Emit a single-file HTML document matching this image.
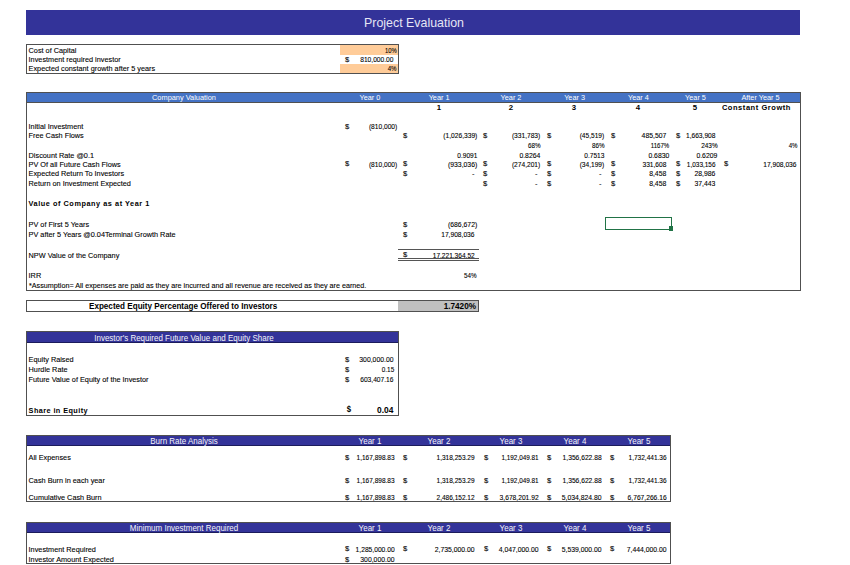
<!DOCTYPE html>
<html><head><meta charset="utf-8"><style>
html,body{margin:0;padding:0;background:#fff;}
body{width:850px;height:565px;position:relative;overflow:hidden;font-family:"Liberation Sans",sans-serif;color:#000;}
.b{position:absolute;box-sizing:border-box;}
.t{position:absolute;white-space:nowrap;}
.k{-webkit-text-stroke:0.1px #000;}
</style></head><body>
<div class="b" style="left:26px;top:10px;width:774px;height:24.5px;background:#333399;"></div>
<div class="t" style="top:17.00px;font-size:12.4px;line-height:12.4px;color:#E6E6F5;left:414.00px;transform:translateX(-50%);transform-origin:center 50%;">Project Evaluation</div>
<div class="b" style="left:340px;top:44.5px;width:58px;height:10.0px;background:#FFCC99;"></div>
<div class="b" style="left:340px;top:63.5px;width:58px;height:10.0px;background:#FFCC99;"></div>
<div class="b" style="left:26px;top:44px;width:373px;height:30px;box-shadow:inset 0 0 0 1px #505050;"></div>
<div class="t k" style="top:46.92px;font-size:7.3px;line-height:7.3px;left:28.60px;">Cost of Capital</div>
<div class="t k" style="top:56.22px;font-size:7.3px;line-height:7.3px;left:28.60px;">Investment required investor</div>
<div class="t k" style="top:65.42px;font-size:7.3px;line-height:7.3px;left:28.60px;">Expected constant growth after 5 years</div>
<div class="t k" style="top:46.82px;font-size:7.3px;line-height:7.3px;right:453.60px;transform:scaleX(0.802);transform-origin:right 50%;">10%</div>
<div class="t k" style="top:55.63px;font-size:8.0px;line-height:8.0px;left:347.20px;transform:translateX(-50%) scaleX(0.95);transform-origin:center 50%;">$</div>
<div class="t k" style="top:55.92px;font-size:7.3px;line-height:7.3px;right:456.00px;transform:scaleX(0.913);transform-origin:right 50%;">810,000.00</div>
<div class="t k" style="top:65.32px;font-size:7.3px;line-height:7.3px;right:453.60px;transform:scaleX(0.836);transform-origin:right 50%;">4%</div>
<div class="b" style="left:26px;top:92px;width:775px;height:199px;box-shadow:inset 0 0 0 1px #505050;"></div>
<div class="b" style="left:26px;top:92px;width:775px;height:11px;background:#4472C4;box-shadow:inset 0 0 0 1px #505050;"></div>
<div class="t" style="top:94.24px;font-size:7.4px;line-height:7.4px;color:#fff;left:184.00px;transform:translateX(-50%);transform-origin:center 50%;">Company Valuation</div>
<div class="t" style="top:94.32px;font-size:7.3px;line-height:7.3px;color:#fff;left:369.90px;transform:translateX(-50%);transform-origin:center 50%;">Year 0</div>
<div class="t" style="top:94.32px;font-size:7.3px;line-height:7.3px;color:#fff;left:439.10px;transform:translateX(-50%);transform-origin:center 50%;">Year 1</div>
<div class="t" style="top:94.32px;font-size:7.3px;line-height:7.3px;color:#fff;left:511.00px;transform:translateX(-50%);transform-origin:center 50%;">Year 2</div>
<div class="t" style="top:94.32px;font-size:7.3px;line-height:7.3px;color:#fff;left:574.60px;transform:translateX(-50%);transform-origin:center 50%;">Year 3</div>
<div class="t" style="top:94.32px;font-size:7.3px;line-height:7.3px;color:#fff;left:638.40px;transform:translateX(-50%);transform-origin:center 50%;">Year 4</div>
<div class="t" style="top:94.32px;font-size:7.3px;line-height:7.3px;color:#fff;left:695.50px;transform:translateX(-50%);transform-origin:center 50%;">Year 5</div>
<div class="t" style="top:94.32px;font-size:7.3px;line-height:7.3px;color:#fff;left:760.50px;transform:translateX(-50%);transform-origin:center 50%;">After Year 5</div>
<div class="t" style="top:103.50px;font-size:7.8px;line-height:7.8px;font-weight:bold;left:439.00px;transform:translateX(-50%);transform-origin:center 50%;">1</div>
<div class="t" style="top:103.50px;font-size:7.8px;line-height:7.8px;font-weight:bold;left:511.00px;transform:translateX(-50%);transform-origin:center 50%;">2</div>
<div class="t" style="top:103.50px;font-size:7.8px;line-height:7.8px;font-weight:bold;left:574.00px;transform:translateX(-50%);transform-origin:center 50%;">3</div>
<div class="t" style="top:103.50px;font-size:7.8px;line-height:7.8px;font-weight:bold;left:638.00px;transform:translateX(-50%);transform-origin:center 50%;">4</div>
<div class="t" style="top:103.50px;font-size:7.8px;line-height:7.8px;font-weight:bold;left:695.00px;transform:translateX(-50%);transform-origin:center 50%;">5</div>
<div class="t" style="top:104.05px;font-size:7.5px;line-height:7.5px;letter-spacing:0.55px;font-weight:bold;left:721.90px;">Constant Growth</div>
<div class="t k" style="top:123.32px;font-size:7.3px;line-height:7.3px;left:28.60px;">Initial Investment</div>
<div class="t k" style="top:132.12px;font-size:7.3px;line-height:7.3px;left:28.60px;">Free Cash Flows</div>
<div class="t k" style="top:151.62px;font-size:7.3px;line-height:7.3px;left:28.60px;">Discount Rate @0.1</div>
<div class="t k" style="top:160.72px;font-size:7.3px;line-height:7.3px;left:28.60px;">PV Of all Future Cash Flows</div>
<div class="t k" style="top:170.32px;font-size:7.3px;line-height:7.3px;left:28.60px;">Expected Return To Investors</div>
<div class="t k" style="top:180.02px;font-size:7.3px;line-height:7.3px;left:28.60px;">Return on Investment Expected</div>
<div class="t k" style="top:123.03px;font-size:8.0px;line-height:8.0px;left:346.80px;transform:translateX(-50%) scaleX(0.95);transform-origin:center 50%;">$</div>
<div class="t k" style="top:123.32px;font-size:7.3px;line-height:7.3px;right:453.00px;transform:scaleX(0.907);transform-origin:right 50%;">(810,000)</div>
<div class="t k" style="top:131.83px;font-size:8.0px;line-height:8.0px;left:405.10px;transform:translateX(-50%) scaleX(0.95);transform-origin:center 50%;">$</div>
<div class="t k" style="top:132.12px;font-size:7.3px;line-height:7.3px;right:373.00px;transform:scaleX(0.911);transform-origin:right 50%;">(1,026,339)</div>
<div class="t k" style="top:131.83px;font-size:8.0px;line-height:8.0px;left:484.80px;transform:translateX(-50%) scaleX(0.95);transform-origin:center 50%;">$</div>
<div class="t k" style="top:132.12px;font-size:7.3px;line-height:7.3px;right:309.50px;transform:scaleX(0.907);transform-origin:right 50%;">(331,783)</div>
<div class="t k" style="top:131.83px;font-size:8.0px;line-height:8.0px;left:548.80px;transform:translateX(-50%) scaleX(0.95);transform-origin:center 50%;">$</div>
<div class="t k" style="top:132.12px;font-size:7.3px;line-height:7.3px;right:246.00px;transform:scaleX(0.902);transform-origin:right 50%;">(45,519)</div>
<div class="t k" style="top:131.83px;font-size:8.0px;line-height:8.0px;left:612.80px;transform:translateX(-50%) scaleX(0.95);transform-origin:center 50%;">$</div>
<div class="t k" style="top:132.12px;font-size:7.3px;line-height:7.3px;right:183.50px;transform:scaleX(0.939);transform-origin:right 50%;">485,507</div>
<div class="t k" style="top:131.83px;font-size:8.0px;line-height:8.0px;left:677.60px;transform:translateX(-50%) scaleX(0.95);transform-origin:center 50%;">$</div>
<div class="t k" style="top:132.12px;font-size:7.3px;line-height:7.3px;right:135.00px;transform:scaleX(0.909);transform-origin:right 50%;">1,663,908</div>
<div class="t k" style="top:142.02px;font-size:7.3px;line-height:7.3px;right:309.00px;transform:scaleX(0.865);transform-origin:right 50%;">68%</div>
<div class="t k" style="top:142.02px;font-size:7.3px;line-height:7.3px;right:245.50px;transform:scaleX(0.865);transform-origin:right 50%;">86%</div>
<div class="t k" style="top:142.02px;font-size:7.3px;line-height:7.3px;right:181.10px;transform:scaleX(0.831);transform-origin:right 50%;">1167%</div>
<div class="t k" style="top:142.02px;font-size:7.3px;line-height:7.3px;right:132.20px;transform:scaleX(0.882);transform-origin:right 50%;">243%</div>
<div class="t k" style="top:142.02px;font-size:7.3px;line-height:7.3px;right:52.00px;transform:scaleX(0.836);transform-origin:right 50%;">4%</div>
<div class="t k" style="top:151.62px;font-size:7.3px;line-height:7.3px;right:373.00px;transform:scaleX(0.897);transform-origin:right 50%;">0.9091</div>
<div class="t k" style="top:151.62px;font-size:7.3px;line-height:7.3px;right:309.50px;transform:scaleX(0.938);transform-origin:right 50%;">0.8264</div>
<div class="t k" style="top:151.62px;font-size:7.3px;line-height:7.3px;right:246.00px;transform:scaleX(0.897);transform-origin:right 50%;">0.7513</div>
<div class="t k" style="top:151.62px;font-size:7.3px;line-height:7.3px;right:181.10px;transform:scaleX(0.938);transform-origin:right 50%;">0.6830</div>
<div class="t k" style="top:151.62px;font-size:7.3px;line-height:7.3px;right:132.80px;transform:scaleX(0.938);transform-origin:right 50%;">0.6209</div>
<div class="t k" style="top:160.43px;font-size:8.0px;line-height:8.0px;left:346.80px;transform:translateX(-50%) scaleX(0.95);transform-origin:center 50%;">$</div>
<div class="t k" style="top:160.72px;font-size:7.3px;line-height:7.3px;right:453.00px;transform:scaleX(0.907);transform-origin:right 50%;">(810,000)</div>
<div class="t k" style="top:160.43px;font-size:8.0px;line-height:8.0px;left:405.10px;transform:translateX(-50%) scaleX(0.95);transform-origin:center 50%;">$</div>
<div class="t k" style="top:160.72px;font-size:7.3px;line-height:7.3px;right:373.00px;transform:scaleX(0.937);transform-origin:right 50%;">(933,036)</div>
<div class="t k" style="top:160.43px;font-size:8.0px;line-height:8.0px;left:484.80px;transform:translateX(-50%) scaleX(0.95);transform-origin:center 50%;">$</div>
<div class="t k" style="top:160.72px;font-size:7.3px;line-height:7.3px;right:309.50px;transform:scaleX(0.907);transform-origin:right 50%;">(274,201)</div>
<div class="t k" style="top:160.43px;font-size:8.0px;line-height:8.0px;left:548.80px;transform:translateX(-50%) scaleX(0.95);transform-origin:center 50%;">$</div>
<div class="t k" style="top:160.72px;font-size:7.3px;line-height:7.3px;right:246.00px;transform:scaleX(0.902);transform-origin:right 50%;">(34,199)</div>
<div class="t k" style="top:160.43px;font-size:8.0px;line-height:8.0px;left:612.80px;transform:translateX(-50%) scaleX(0.95);transform-origin:center 50%;">$</div>
<div class="t k" style="top:160.72px;font-size:7.3px;line-height:7.3px;right:183.50px;transform:scaleX(0.904);transform-origin:right 50%;">331,608</div>
<div class="t k" style="top:160.43px;font-size:8.0px;line-height:8.0px;left:677.60px;transform:translateX(-50%) scaleX(0.95);transform-origin:center 50%;">$</div>
<div class="t k" style="top:160.72px;font-size:7.3px;line-height:7.3px;right:135.00px;transform:scaleX(0.881);transform-origin:right 50%;">1,033,156</div>
<div class="t k" style="top:160.43px;font-size:8.0px;line-height:8.0px;left:725.60px;transform:translateX(-50%) scaleX(0.95);transform-origin:center 50%;">$</div>
<div class="t k" style="top:160.72px;font-size:7.3px;line-height:7.3px;right:53.60px;transform:scaleX(0.913);transform-origin:right 50%;">17,908,036</div>
<div class="t k" style="top:170.03px;font-size:8.0px;line-height:8.0px;left:405.10px;transform:translateX(-50%) scaleX(0.95);transform-origin:center 50%;">$</div>
<div class="t k" style="top:170.32px;font-size:7.3px;line-height:7.3px;right:375.60px;transform:scaleX(1.029);transform-origin:right 50%;">-</div>
<div class="t k" style="top:170.03px;font-size:8.0px;line-height:8.0px;left:484.80px;transform:translateX(-50%) scaleX(0.95);transform-origin:center 50%;">$</div>
<div class="t k" style="top:170.32px;font-size:7.3px;line-height:7.3px;right:312.10px;transform:scaleX(1.029);transform-origin:right 50%;">-</div>
<div class="t k" style="top:170.03px;font-size:8.0px;line-height:8.0px;left:548.80px;transform:translateX(-50%) scaleX(0.95);transform-origin:center 50%;">$</div>
<div class="t k" style="top:170.32px;font-size:7.3px;line-height:7.3px;right:248.60px;transform:scaleX(1.029);transform-origin:right 50%;">-</div>
<div class="t k" style="top:170.03px;font-size:8.0px;line-height:8.0px;left:612.80px;transform:translateX(-50%) scaleX(0.95);transform-origin:center 50%;">$</div>
<div class="t k" style="top:170.32px;font-size:7.3px;line-height:7.3px;right:183.50px;transform:scaleX(0.938);transform-origin:right 50%;">8,458</div>
<div class="t k" style="top:170.03px;font-size:8.0px;line-height:8.0px;left:677.60px;transform:translateX(-50%) scaleX(0.95);transform-origin:center 50%;">$</div>
<div class="t k" style="top:170.32px;font-size:7.3px;line-height:7.3px;right:135.00px;transform:scaleX(0.938);transform-origin:right 50%;">28,986</div>
<div class="t k" style="top:179.73px;font-size:8.0px;line-height:8.0px;left:484.80px;transform:translateX(-50%) scaleX(0.95);transform-origin:center 50%;">$</div>
<div class="t k" style="top:180.02px;font-size:7.3px;line-height:7.3px;right:312.10px;transform:scaleX(1.029);transform-origin:right 50%;">-</div>
<div class="t k" style="top:179.73px;font-size:8.0px;line-height:8.0px;left:548.80px;transform:translateX(-50%) scaleX(0.95);transform-origin:center 50%;">$</div>
<div class="t k" style="top:180.02px;font-size:7.3px;line-height:7.3px;right:248.60px;transform:scaleX(1.029);transform-origin:right 50%;">-</div>
<div class="t k" style="top:179.73px;font-size:8.0px;line-height:8.0px;left:612.80px;transform:translateX(-50%) scaleX(0.95);transform-origin:center 50%;">$</div>
<div class="t k" style="top:180.02px;font-size:7.3px;line-height:7.3px;right:183.50px;transform:scaleX(0.938);transform-origin:right 50%;">8,458</div>
<div class="t k" style="top:179.73px;font-size:8.0px;line-height:8.0px;left:677.60px;transform:translateX(-50%) scaleX(0.95);transform-origin:center 50%;">$</div>
<div class="t k" style="top:180.02px;font-size:7.3px;line-height:7.3px;right:135.00px;transform:scaleX(0.938);transform-origin:right 50%;">37,443</div>
<div class="t" style="top:200.32px;font-size:7.3px;line-height:7.3px;letter-spacing:0.55px;font-weight:bold;left:28.60px;">Value of Company as at Year 1</div>
<div class="t k" style="top:220.92px;font-size:7.3px;line-height:7.3px;left:28.60px;">PV of First 5 Years</div>
<div class="t k" style="top:221.13px;font-size:8.0px;line-height:8.0px;left:405.10px;transform:translateX(-50%) scaleX(0.95);transform-origin:center 50%;">$</div>
<div class="t k" style="top:221.42px;font-size:7.3px;line-height:7.3px;right:373.00px;transform:scaleX(0.937);transform-origin:right 50%;">(686,672)</div>
<div class="t k" style="top:230.82px;font-size:7.3px;line-height:7.3px;left:28.60px;">PV after 5 Years @0.04Terminal Growth Rate</div>
<div class="t k" style="top:230.83px;font-size:8.0px;line-height:8.0px;left:405.10px;transform:translateX(-50%) scaleX(0.95);transform-origin:center 50%;">$</div>
<div class="t k" style="top:231.12px;font-size:7.3px;line-height:7.3px;right:375.40px;transform:scaleX(0.913);transform-origin:right 50%;">17,908,036</div>
<div class="t k" style="top:251.62px;font-size:7.3px;line-height:7.3px;left:28.60px;">NPW Value of the Company</div>
<div class="t k" style="top:251.23px;font-size:8.0px;line-height:8.0px;left:405.10px;transform:translateX(-50%) scaleX(0.95);transform-origin:center 50%;">$</div>
<div class="t k" style="top:251.52px;font-size:7.3px;line-height:7.3px;right:375.40px;transform:scaleX(0.898);transform-origin:right 50%;">17,221,364.52</div>
<div class="b" style="left:398px;top:248.5px;width:81px;height:1px;background:#555"></div>
<div class="b" style="left:398px;top:258px;width:81px;height:1px;background:#555"></div>
<div class="b" style="left:398px;top:260px;width:81px;height:1px;background:#555"></div>
<div class="t k" style="top:272.12px;font-size:7.3px;line-height:7.3px;left:28.60px;">IRR</div>
<div class="t k" style="top:272.02px;font-size:7.3px;line-height:7.3px;right:373.00px;transform:scaleX(0.865);transform-origin:right 50%;">54%</div>
<div class="t k" style="top:282.22px;font-size:7.3px;line-height:7.3px;left:28.60px;transform:scaleX(0.986);transform-origin:left 50%;">*Assumption= All expenses are paid as they are incurred and all revenue are received as they are earned.</div>
<div class="b" style="left:604.5px;top:217px;width:67.5px;height:12.5px;border:1.6px solid #217346"></div>
<div class="b" style="left:668.6px;top:226.1px;width:4.399999999999977px;height:4.5px;background:#217346;"></div>
<div class="b" style="left:398px;top:300.5px;width:80px;height:11.0px;background:#C0C0C0;"></div>
<div class="b" style="left:26px;top:300px;width:453px;height:11.5px;box-shadow:inset 0 0 0 1px #505050;"></div>
<div class="t" style="top:302.76px;font-size:8.2px;line-height:8.2px;font-weight:bold;left:89.40px;transform:scaleX(0.99);transform-origin:left 50%;">Expected Equity Percentage Offered to Investors</div>
<div class="t" style="top:302.76px;font-size:8.2px;line-height:8.2px;font-weight:bold;right:374.00px;">1.7420%</div>
<div class="b" style="left:26px;top:331px;width:373px;height:84.5px;box-shadow:inset 0 0 0 1px #505050;"></div>
<div class="b" style="left:26px;top:331px;width:373px;height:12px;background:#333399;box-shadow:inset 0 0 0 1px #505050;"></div>
<div class="b" style="left:27px;top:342px;width:371px;height:1px;background:#1c1c5c"></div>
<div class="t" style="top:333.72px;font-size:8.6px;line-height:8.6px;color:#F4F4FA;left:183.70px;transform:translateX(-50%) scaleX(0.93);transform-origin:center 50%;">Investor's Required Future Value and Equity Share</div>
<div class="t k" style="top:355.92px;font-size:7.3px;line-height:7.3px;left:28.60px;">Equity Raised</div>
<div class="t k" style="top:355.63px;font-size:8.0px;line-height:8.0px;left:347.20px;transform:translateX(-50%) scaleX(0.95);transform-origin:center 50%;">$</div>
<div class="t k" style="top:355.92px;font-size:7.3px;line-height:7.3px;right:456.00px;transform:scaleX(0.938);transform-origin:right 50%;">300,000.00</div>
<div class="t k" style="top:365.92px;font-size:7.3px;line-height:7.3px;left:28.60px;">Hurdle Rate</div>
<div class="t k" style="top:365.63px;font-size:8.0px;line-height:8.0px;left:347.20px;transform:translateX(-50%) scaleX(0.95);transform-origin:center 50%;">$</div>
<div class="t k" style="top:365.92px;font-size:7.3px;line-height:7.3px;right:456.00px;transform:scaleX(0.872);transform-origin:right 50%;">0.15</div>
<div class="t k" style="top:376.12px;font-size:7.3px;line-height:7.3px;left:28.60px;">Future Value of Equity of the Investor</div>
<div class="t k" style="top:375.83px;font-size:8.0px;line-height:8.0px;left:347.20px;transform:translateX(-50%) scaleX(0.95);transform-origin:center 50%;">$</div>
<div class="t k" style="top:376.12px;font-size:7.3px;line-height:7.3px;right:456.00px;transform:scaleX(0.913);transform-origin:right 50%;">603,407.16</div>
<div class="t" style="top:406.72px;font-size:7.3px;line-height:7.3px;letter-spacing:0.42px;font-weight:bold;left:28.60px;">Share in Equity</div>
<div class="t" style="top:406.26px;font-size:8.2px;line-height:8.2px;font-weight:bold;left:348.60px;transform:translateX(-50%) scaleX(0.95);transform-origin:center 50%;">$</div>
<div class="t" style="top:405.79px;font-size:8.4px;line-height:8.4px;font-weight:bold;right:456.60px;">0.04</div>
<div class="b" style="left:26px;top:435px;width:645px;height:66.5px;box-shadow:inset 0 0 0 1px #505050;"></div>
<div class="b" style="left:26px;top:435px;width:645px;height:11px;background:#333399;box-shadow:inset 0 0 0 1px #505050;"></div>
<div class="b" style="left:27px;top:445px;width:643px;height:1px;background:#1c1c5c"></div>
<div class="t" style="top:437.32px;font-size:8.6px;line-height:8.6px;color:#F4F4FA;left:184.00px;transform:translateX(-50%) scaleX(0.93);transform-origin:center 50%;">Burn Rate Analysis</div>
<div class="t" style="top:437.32px;font-size:8.6px;line-height:8.6px;color:#F4F4FA;left:369.60px;transform:translateX(-50%) scaleX(0.93);transform-origin:center 50%;">Year 1</div>
<div class="t" style="top:437.32px;font-size:8.6px;line-height:8.6px;color:#F4F4FA;left:438.60px;transform:translateX(-50%) scaleX(0.93);transform-origin:center 50%;">Year 2</div>
<div class="t" style="top:437.32px;font-size:8.6px;line-height:8.6px;color:#F4F4FA;left:511.20px;transform:translateX(-50%) scaleX(0.93);transform-origin:center 50%;">Year 3</div>
<div class="t" style="top:437.32px;font-size:8.6px;line-height:8.6px;color:#F4F4FA;left:574.50px;transform:translateX(-50%) scaleX(0.93);transform-origin:center 50%;">Year 4</div>
<div class="t" style="top:437.32px;font-size:8.6px;line-height:8.6px;color:#F4F4FA;left:638.60px;transform:translateX(-50%) scaleX(0.93);transform-origin:center 50%;">Year 5</div>
<div class="t k" style="top:454.32px;font-size:7.3px;line-height:7.3px;left:28.60px;">All Expenses</div>
<div class="t k" style="top:454.03px;font-size:8.0px;line-height:8.0px;left:347.20px;transform:translateX(-50%) scaleX(0.95);transform-origin:center 50%;">$</div>
<div class="t k" style="top:454.32px;font-size:7.3px;line-height:7.3px;right:455.90px;transform:scaleX(0.894);transform-origin:right 50%;">1,167,898.83</div>
<div class="t k" style="top:454.03px;font-size:8.0px;line-height:8.0px;left:405.30px;transform:translateX(-50%) scaleX(0.95);transform-origin:center 50%;">$</div>
<div class="t k" style="top:454.32px;font-size:7.3px;line-height:7.3px;right:375.70px;transform:scaleX(0.894);transform-origin:right 50%;">1,318,253.29</div>
<div class="t k" style="top:454.03px;font-size:8.0px;line-height:8.0px;left:485.50px;transform:translateX(-50%) scaleX(0.95);transform-origin:center 50%;">$</div>
<div class="t k" style="top:454.32px;font-size:7.3px;line-height:7.3px;right:311.90px;transform:scaleX(0.872);transform-origin:right 50%;">1,192,049.81</div>
<div class="t k" style="top:454.03px;font-size:8.0px;line-height:8.0px;left:548.70px;transform:translateX(-50%) scaleX(0.95);transform-origin:center 50%;">$</div>
<div class="t k" style="top:454.32px;font-size:7.3px;line-height:7.3px;right:248.20px;transform:scaleX(0.915);transform-origin:right 50%;">1,356,622.88</div>
<div class="t k" style="top:454.03px;font-size:8.0px;line-height:8.0px;left:612.30px;transform:translateX(-50%) scaleX(0.95);transform-origin:center 50%;">$</div>
<div class="t k" style="top:454.32px;font-size:7.3px;line-height:7.3px;right:183.00px;transform:scaleX(0.894);transform-origin:right 50%;">1,732,441.36</div>
<div class="t k" style="top:477.42px;font-size:7.3px;line-height:7.3px;left:28.60px;">Cash Burn in each year</div>
<div class="t k" style="top:477.13px;font-size:8.0px;line-height:8.0px;left:347.20px;transform:translateX(-50%) scaleX(0.95);transform-origin:center 50%;">$</div>
<div class="t k" style="top:477.42px;font-size:7.3px;line-height:7.3px;right:455.90px;transform:scaleX(0.894);transform-origin:right 50%;">1,167,898.83</div>
<div class="t k" style="top:477.13px;font-size:8.0px;line-height:8.0px;left:405.30px;transform:translateX(-50%) scaleX(0.95);transform-origin:center 50%;">$</div>
<div class="t k" style="top:477.42px;font-size:7.3px;line-height:7.3px;right:375.70px;transform:scaleX(0.894);transform-origin:right 50%;">1,318,253.29</div>
<div class="t k" style="top:477.13px;font-size:8.0px;line-height:8.0px;left:485.50px;transform:translateX(-50%) scaleX(0.95);transform-origin:center 50%;">$</div>
<div class="t k" style="top:477.42px;font-size:7.3px;line-height:7.3px;right:311.90px;transform:scaleX(0.872);transform-origin:right 50%;">1,192,049.81</div>
<div class="t k" style="top:477.13px;font-size:8.0px;line-height:8.0px;left:548.70px;transform:translateX(-50%) scaleX(0.95);transform-origin:center 50%;">$</div>
<div class="t k" style="top:477.42px;font-size:7.3px;line-height:7.3px;right:248.20px;transform:scaleX(0.915);transform-origin:right 50%;">1,356,622.88</div>
<div class="t k" style="top:477.13px;font-size:8.0px;line-height:8.0px;left:612.30px;transform:translateX(-50%) scaleX(0.95);transform-origin:center 50%;">$</div>
<div class="t k" style="top:477.42px;font-size:7.3px;line-height:7.3px;right:183.00px;transform:scaleX(0.894);transform-origin:right 50%;">1,732,441.36</div>
<div class="t k" style="top:494.12px;font-size:7.3px;line-height:7.3px;left:28.60px;">Cumulative Cash Burn</div>
<div class="t k" style="top:493.83px;font-size:8.0px;line-height:8.0px;left:347.20px;transform:translateX(-50%) scaleX(0.95);transform-origin:center 50%;">$</div>
<div class="t k" style="top:494.12px;font-size:7.3px;line-height:7.3px;right:455.90px;transform:scaleX(0.894);transform-origin:right 50%;">1,167,898.83</div>
<div class="t k" style="top:493.83px;font-size:8.0px;line-height:8.0px;left:405.30px;transform:translateX(-50%) scaleX(0.95);transform-origin:center 50%;">$</div>
<div class="t k" style="top:494.12px;font-size:7.3px;line-height:7.3px;right:375.70px;transform:scaleX(0.894);transform-origin:right 50%;">2,486,152.12</div>
<div class="t k" style="top:493.83px;font-size:8.0px;line-height:8.0px;left:485.50px;transform:translateX(-50%) scaleX(0.95);transform-origin:center 50%;">$</div>
<div class="t k" style="top:494.12px;font-size:7.3px;line-height:7.3px;right:311.90px;transform:scaleX(0.915);transform-origin:right 50%;">3,678,201.92</div>
<div class="t k" style="top:493.83px;font-size:8.0px;line-height:8.0px;left:548.70px;transform:translateX(-50%) scaleX(0.95);transform-origin:center 50%;">$</div>
<div class="t k" style="top:494.12px;font-size:7.3px;line-height:7.3px;right:248.20px;transform:scaleX(0.937);transform-origin:right 50%;">5,034,824.80</div>
<div class="t k" style="top:493.83px;font-size:8.0px;line-height:8.0px;left:612.30px;transform:translateX(-50%) scaleX(0.95);transform-origin:center 50%;">$</div>
<div class="t k" style="top:494.12px;font-size:7.3px;line-height:7.3px;right:183.00px;transform:scaleX(0.915);transform-origin:right 50%;">6,767,266.16</div>
<div class="b" style="left:26px;top:522px;width:645px;height:42px;box-shadow:inset 0 0 0 1px #505050;"></div>
<div class="b" style="left:26px;top:522px;width:645px;height:11px;background:#333399;box-shadow:inset 0 0 0 1px #505050;"></div>
<div class="b" style="left:27px;top:532px;width:643px;height:1px;background:#1c1c5c"></div>
<div class="t" style="top:523.82px;font-size:8.6px;line-height:8.6px;color:#F4F4FA;left:184.00px;transform:translateX(-50%) scaleX(0.93);transform-origin:center 50%;">Minimum Investment Required</div>
<div class="t" style="top:523.82px;font-size:8.6px;line-height:8.6px;color:#F4F4FA;left:369.60px;transform:translateX(-50%) scaleX(0.93);transform-origin:center 50%;">Year 1</div>
<div class="t" style="top:523.82px;font-size:8.6px;line-height:8.6px;color:#F4F4FA;left:438.60px;transform:translateX(-50%) scaleX(0.93);transform-origin:center 50%;">Year 2</div>
<div class="t" style="top:523.82px;font-size:8.6px;line-height:8.6px;color:#F4F4FA;left:511.20px;transform:translateX(-50%) scaleX(0.93);transform-origin:center 50%;">Year 3</div>
<div class="t" style="top:523.82px;font-size:8.6px;line-height:8.6px;color:#F4F4FA;left:574.50px;transform:translateX(-50%) scaleX(0.93);transform-origin:center 50%;">Year 4</div>
<div class="t" style="top:523.82px;font-size:8.6px;line-height:8.6px;color:#F4F4FA;left:638.60px;transform:translateX(-50%) scaleX(0.93);transform-origin:center 50%;">Year 5</div>
<div class="t k" style="top:545.62px;font-size:7.3px;line-height:7.3px;left:28.60px;">Investment Required</div>
<div class="t k" style="top:545.33px;font-size:8.0px;line-height:8.0px;left:347.20px;transform:translateX(-50%) scaleX(0.95);transform-origin:center 50%;">$</div>
<div class="t k" style="top:545.62px;font-size:7.3px;line-height:7.3px;right:455.90px;transform:scaleX(0.915);transform-origin:right 50%;">1,285,000.00</div>
<div class="t k" style="top:545.33px;font-size:8.0px;line-height:8.0px;left:405.30px;transform:translateX(-50%) scaleX(0.95);transform-origin:center 50%;">$</div>
<div class="t k" style="top:545.62px;font-size:7.3px;line-height:7.3px;right:375.70px;transform:scaleX(0.937);transform-origin:right 50%;">2,735,000.00</div>
<div class="t k" style="top:545.33px;font-size:8.0px;line-height:8.0px;left:485.50px;transform:translateX(-50%) scaleX(0.95);transform-origin:center 50%;">$</div>
<div class="t k" style="top:545.62px;font-size:7.3px;line-height:7.3px;right:311.90px;transform:scaleX(0.937);transform-origin:right 50%;">4,047,000.00</div>
<div class="t k" style="top:545.33px;font-size:8.0px;line-height:8.0px;left:548.70px;transform:translateX(-50%) scaleX(0.95);transform-origin:center 50%;">$</div>
<div class="t k" style="top:545.62px;font-size:7.3px;line-height:7.3px;right:248.20px;transform:scaleX(0.937);transform-origin:right 50%;">5,539,000.00</div>
<div class="t k" style="top:545.33px;font-size:8.0px;line-height:8.0px;left:612.30px;transform:translateX(-50%) scaleX(0.95);transform-origin:center 50%;">$</div>
<div class="t k" style="top:545.62px;font-size:7.3px;line-height:7.3px;right:183.00px;transform:scaleX(0.937);transform-origin:right 50%;">7,444,000.00</div>
<div class="t k" style="top:555.82px;font-size:7.3px;line-height:7.3px;left:28.60px;">Investor Amount Expected</div>
<div class="t k" style="top:555.53px;font-size:8.0px;line-height:8.0px;left:347.20px;transform:translateX(-50%) scaleX(0.95);transform-origin:center 50%;">$</div>
<div class="t k" style="top:555.82px;font-size:7.3px;line-height:7.3px;right:455.90px;transform:scaleX(0.938);transform-origin:right 50%;">300,000.00</div>
</body></html>
